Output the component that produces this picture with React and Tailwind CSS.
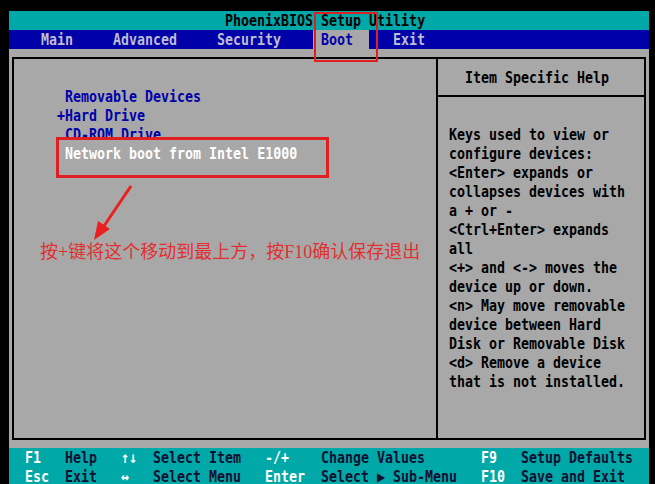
import React from "react";

const mono = { fontFamily: '"DejaVu Sans Mono", "Liberation Mono", monospace' };

// taller glyphs, like the VGA text font
const tall = "inline-block scale-y-[1.18]";

const helpLines = [
  "Keys used to view or",
  "configure devices:",
  "<Enter> expands or",
  "collapses devices with",
  "a + or -",
  "<Ctrl+Enter> expands",
  "all",
  "<+> and <-> moves the",
  "device up or down.",
  "<n> May move removable",
  "device between Hard",
  "Disk or Removable Disk",
  "<d> Remove a device",
  "that is not installed.",
];

const bootItems = [
  { text: " Removable Devices", color: "text-[#0000a8]" },
  { text: "+Hard Drive", color: "text-[#0000a8]" },
  { text: " CD-ROM Drive", color: "text-[#0000a8]" },
  { text: " Network boot from Intel E1000", color: "text-white" },
];

const footer = [
  ["F1", "Help", "↑↓", "Select Item", "-/+", "Change Values", "F9", "Setup Defaults"],
  ["Esc", "Exit", "↔", "Select Menu", "Enter", "Select ▶ Sub-Menu", "F10", "Save and Exit"],
];

function FooterRow({ cells }) {
  const widths = ["w-[40px]", "w-[56px]", "w-[32px]", "w-[112px]", "w-[56px]", "w-[160px]", "w-[40px]", "flex-1"];
  return (
    <div className="flex h-[19px] items-center pl-[16px] whitespace-pre">
      {cells.map((c, i) => (
        <span
          key={i}
          className={`${widths[i]} scale-y-[1.18] ${i % 2 === 0 ? "text-white" : "text-[#101030]"}`}
        >
          {c}
        </span>
      ))}
    </div>
  );
}

export default function App() {
  return (
    <div
      className="relative w-[655px] h-[484px] overflow-hidden bg-black pt-[10.5px] pl-[9px] text-[13.3px] font-bold leading-[19px]"
      style={mono}
    >
      <div className="w-[640px]">
        {/* title */}
        <div className="h-[19px] bg-[#00a8a8] pl-[216px] text-black whitespace-pre">
          <span className={tall}>PhoenixBIOS Setup Utility</span>
        </div>

        {/* menu bar */}
        <div className="flex h-[19px] bg-[#0000a8] text-[#bcbcd4] whitespace-pre">
          <span className="w-[32px]" />
          <span className="w-[72px]"><span className={tall}>Main</span></span>
          <span className="w-[104px]"><span className={tall}>Advanced</span></span>
          <span className="w-[96px]"><span className={tall}>Security</span></span>
          <span className="w-[56px] bg-[#a8a8a8] pl-[8px] text-[#0000a8]">
            <span className={tall}>Boot</span>
          </span>
          <span className="w-[24px]" />
          <span><span className={tall}>Exit</span></span>
        </div>

        {/* main area */}
        <div className="h-[399px] bg-[#a8a8a8] pt-[8.5px] px-[3px]">
          <div className="flex h-[383px] border-2 border-black">
            <div className="w-[422px] pt-[27.5px] pl-[43px]">
              {bootItems.map((item) => (
                <div key={item.text} className={`h-[19px] whitespace-pre ${item.color}`}>
                  <span className={tall}>{item.text}</span>
                </div>
              ))}
            </div>
            <div className="flex-1 border-l-2 border-black">
              <div className="flex h-[38px] items-center border-b-2 border-black pl-[27px] text-black">
                <span className={tall}>Item Specific Help</span>
              </div>
              <div className="pt-[27.5px] pl-[11px] text-black">
                {helpLines.map((l) => (
                  <div key={l} className="h-[19px] whitespace-pre">
                    <span className={tall}>{l}</span>
                  </div>
                ))}
              </div>
            </div>
          </div>
        </div>

        {/* footer */}
        <div className="h-[38px] bg-[#00a8a8]">
          {footer.map((row, i) => (
            <FooterRow key={i} cells={row} />
          ))}
        </div>
      </div>

      {/* annotations */}
      <div className="absolute left-[314px] top-[12px] h-[50px] w-[64px] border-2 border-[#e02020]" />
      <div className="absolute left-[56px] top-[137px] h-[41px] w-[273px] border-[3px] border-[#e02020]" />
      <svg className="absolute left-0 top-0" width="655" height="484">
        <line x1="131" y1="186" x2="104" y2="226" stroke="#e82020" strokeWidth="3" />
        <polygon points="94,240 98,221 110,229" fill="#e82020" />
      </svg>
      <div
        className="absolute left-[40px] top-[240px] text-[18px] font-normal leading-[24px] text-[#e03030]"
        style={{ fontFamily: '"Liberation Serif", "Noto Sans CJK SC", serif' }}
      >
        按+键将这个移动到最上方，按F10确认保存退出
      </div>
    </div>
  );
}
